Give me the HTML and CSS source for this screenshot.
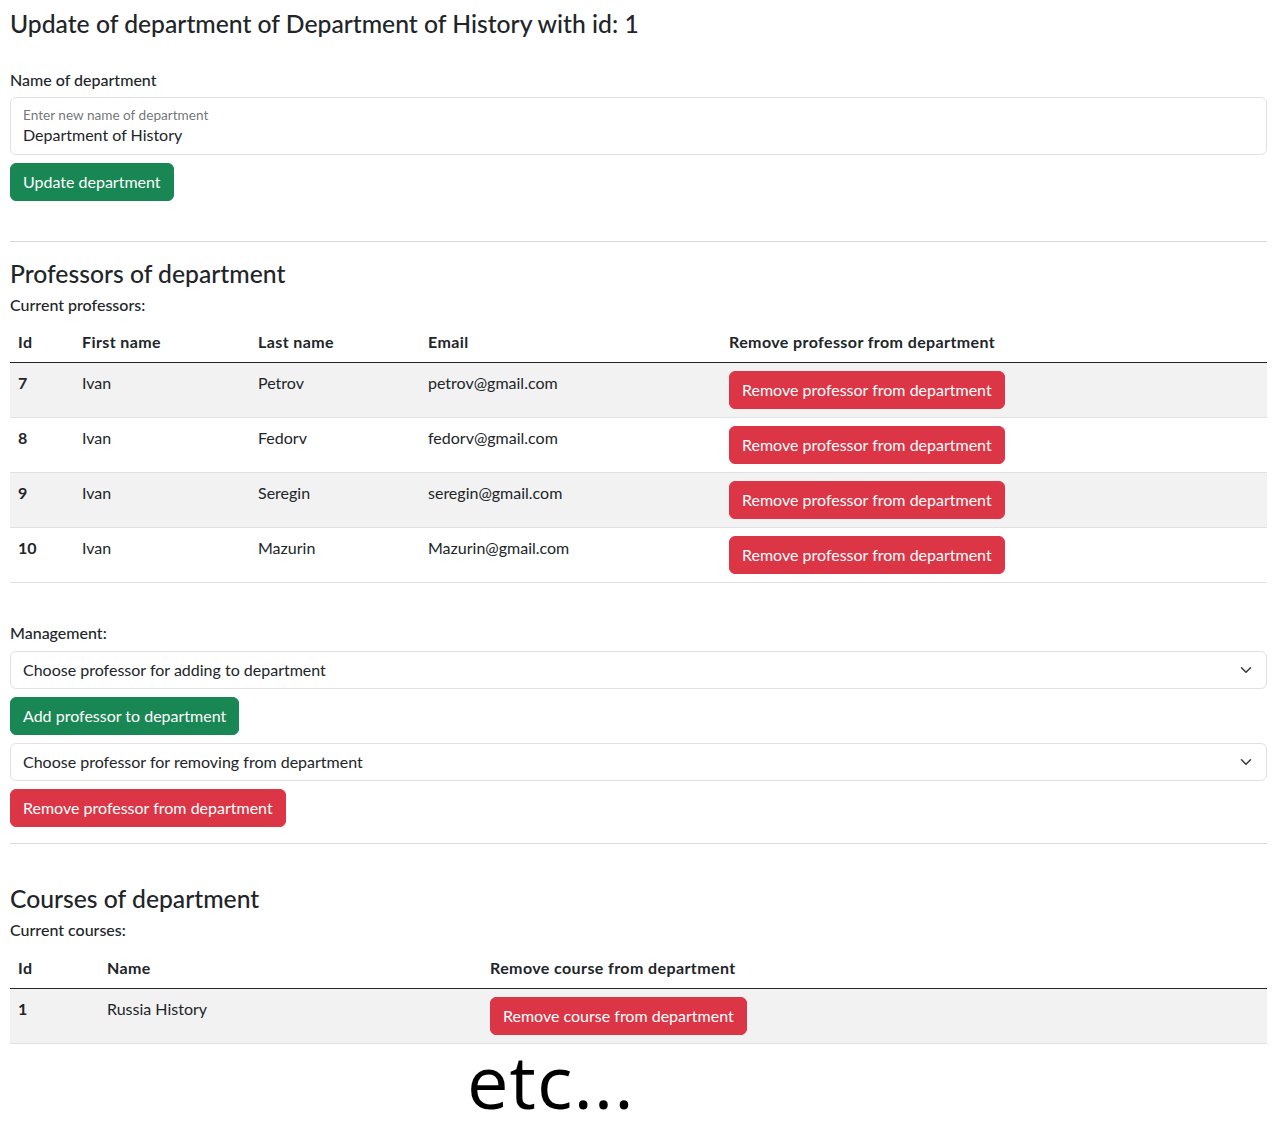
FILE: index.html
```html
<!DOCTYPE html>
<html lang="en">
<head>
<meta charset="utf-8">
<title>Update department</title>
<link rel="stylesheet" href="styles.css">
</head>
<body>
<main class="page">
  <h1 class="title">Update of department of Department of History with id: 1</h1>

  <form class="block">
    <label class="label">Name of department</label>
    <div class="floating">
      <span class="floating-label">Enter new name of department</span>
      <span class="floating-value">Department of History</span>
    </div>
    <button type="button" class="btn btn-green">Update department</button>
  </form>

  <hr class="divider divider-first">

  <section>
    <h2 class="heading">Professors of department</h2>
    <div class="label">Current professors:</div>
    <table class="table table-prof">
      <thead>
        <tr><th>Id</th><th>First name</th><th>Last name</th><th>Email</th><th>Remove professor from department</th></tr>
      </thead>
      <tbody>
        <tr class="striped"><th>7</th><td>Ivan</td><td>Petrov</td><td>petrov@gmail.com</td><td><button type="button" class="btn btn-red">Remove professor from department</button></td></tr>
        <tr><th>8</th><td>Ivan</td><td>Fedorv</td><td>fedorv@gmail.com</td><td><button type="button" class="btn btn-red">Remove professor from department</button></td></tr>
        <tr class="striped"><th>9</th><td>Ivan</td><td>Seregin</td><td>seregin@gmail.com</td><td><button type="button" class="btn btn-red">Remove professor from department</button></td></tr>
        <tr><th>10</th><td>Ivan</td><td>Mazurin</td><td>Mazurin@gmail.com</td><td><button type="button" class="btn btn-red">Remove professor from department</button></td></tr>
      </tbody>
    </table>

    <div class="label management">Management:</div>
    <div class="select select-first">
      <span>Choose professor for adding to department</span>
      <svg class="chevron" width="12" height="12" viewBox="0 0 16 16"><path d="M2 5l6 6 6-6" fill="none" stroke="#343a40" stroke-width="2" stroke-linecap="round" stroke-linejoin="round"/></svg>
    </div>
    <button type="button" class="btn btn-green">Add professor to department</button>
    <div class="select">
      <span>Choose professor for removing from department</span>
      <svg class="chevron" width="12" height="12" viewBox="0 0 16 16"><path d="M2 5l6 6 6-6" fill="none" stroke="#343a40" stroke-width="2" stroke-linecap="round" stroke-linejoin="round"/></svg>
    </div>
    <button type="button" class="btn btn-red">Remove professor from department</button>
  </section>

  <hr class="divider divider-second">

  <section>
    <h2 class="heading heading-second">Courses of department</h2>
    <div class="label">Current courses:</div>
    <table class="table table-course">
      <thead>
        <tr><th>Id</th><th>Name</th><th>Remove course from department</th></tr>
      </thead>
      <tbody>
        <tr class="striped"><th>1</th><td>Russia History</td><td><button type="button" class="btn btn-red">Remove course from department</button></td></tr>
      </tbody>
    </table>
  </section>

  <div class="etc">etc...</div>
</main>
</body>
</html>
```

FILE: styles.css
```css
* { box-sizing: border-box; }
html, body { margin: 0; padding: 0; background: #fff; }
body {
  font-family: Lato, "Noto Sans", sans-serif;
  font-size: 16px;
  line-height: 1.5;
  color: #212529;
}
.page { padding: 0 16px 0 10px; }

.title {
  margin: 0;
  padding-top: 9px;
  font-size: 24.7px;
  font-weight: 500;
  line-height: 29px;
}
.block { margin-top: 30px; }
.label { font-weight: 500; font-size: 16px; line-height: 24px; }
.floating {
  margin-top: 5px;
  height: 58px;
  border: 1px solid #dee2e6;
  border-radius: 6px;
  padding: 8px 12px 0;
  display: flex;
  flex-direction: column;
}
.floating-label { font-size: 13.6px; color: rgba(33,37,41,.65); line-height: 19px; }
.floating-value { font-size: 16px; line-height: 20px; }

.btn {
  display: inline-block;
  font-family: inherit;
  font-size: 16px;
  line-height: 24px;
  padding: 6px 12px;
  border: 1px solid transparent;
  border-radius: 6px;
  color: #fff;
  cursor: pointer;
  white-space: nowrap;
}
.btn-green { background: #198754; border-color: #198754; margin-top: 8px; }
.btn-red { background: #dc3545; border-color: #dc3545; }

.divider {
  border: 0;
  border-top: 1px solid #d9d9d9;
  margin: 0;
}
.divider-first { margin-top: 40px; }
.divider-second { margin-top: 16px; }

.heading {
  margin: 0 0 4px;
  padding-top: 17px;
  font-size: 24.7px;
  font-weight: 500;
  line-height: 30px;
}
.heading-second { padding-top: 40px; margin-bottom: 4px; }
.table {
  width: 100%;
  border-collapse: collapse;
  margin-top: 5px;
  margin-bottom: 16px;
}
.table th, .table td {
  text-align: left;
  vertical-align: top;
  padding: 8px;
  border-bottom: 1px solid #dee2e6;
}
.table thead th {
  font-weight: 700;
  letter-spacing: 0.4px;
  border-bottom: 1px solid #212529;
}
.table tbody th { font-weight: 700; }
.table tbody td, .table tbody th { height: 55px; }
.table tr.striped > * { background: #f2f2f2; }

.table-prof th:nth-child(1) { width: 64px; }
.table-prof th:nth-child(2) { width: 176px; }
.table-prof th:nth-child(3) { width: 170px; }
.table-prof th:nth-child(4) { width: 301px; }
.table-course { margin-top: 6px; margin-bottom: 0; }
.table-course th:nth-child(1) { width: 89px; }
.table-course th:nth-child(2) { width: 383px; }

.management { margin-top: 38px; }
.select {
  margin-top: 8px;
  height: 38px;
  border: 1px solid #dee2e6;
  border-radius: 6px;
  padding: 6px 12px;
  display: flex;
  align-items: center;
  justify-content: space-between;
}
.select-first { margin-top: 6px; }
.select + .btn { margin-top: 8px; }
.chevron { margin-right: 2px; }

.etc {
  font-family: "Open Sans", "Noto Sans", sans-serif;
  font-size: 74px;
  letter-spacing: 1px;
  line-height: 1;
  color: #000;
  padding-left: 457px;
}
```
